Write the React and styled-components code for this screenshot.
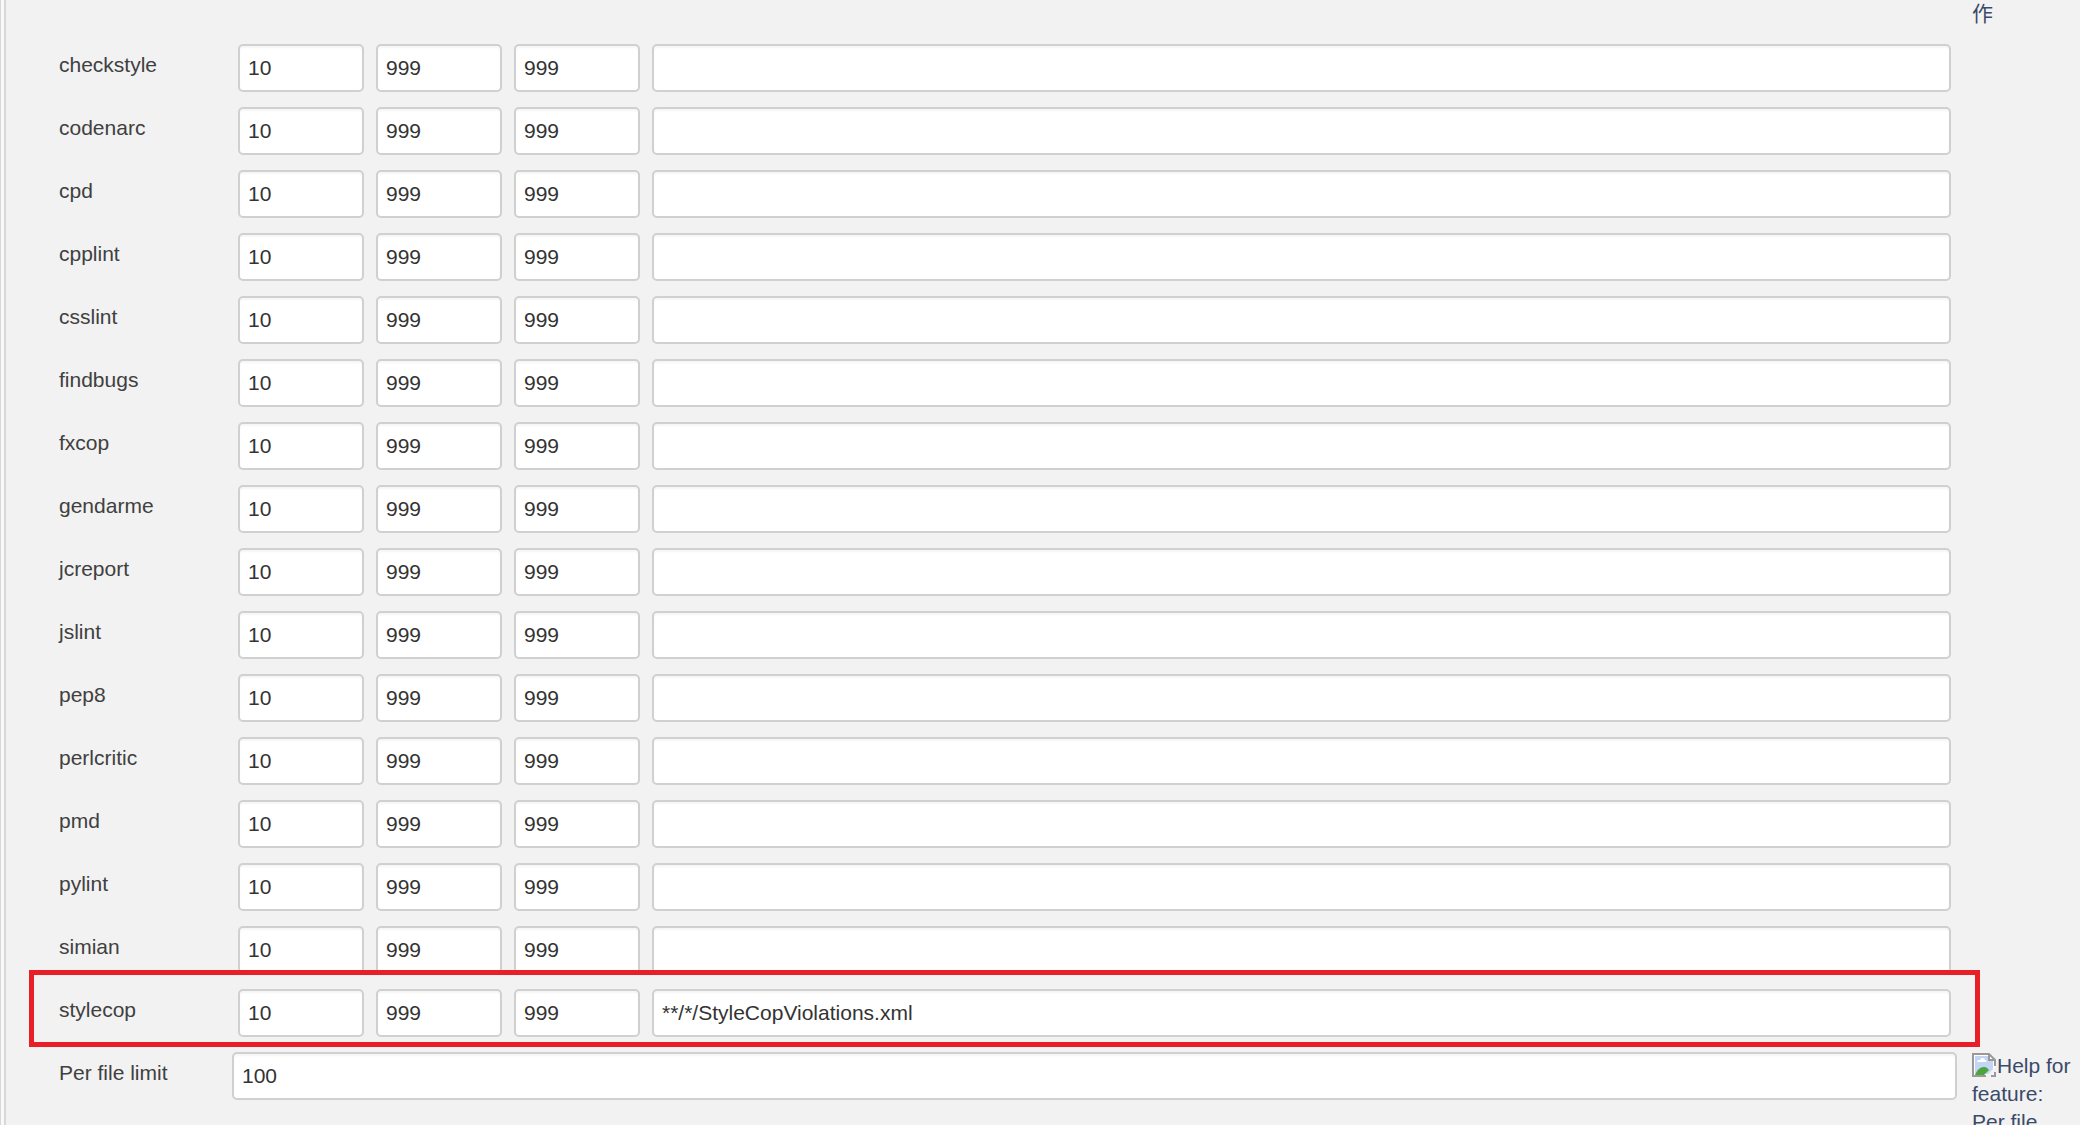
import React from 'react';
import styled, { createGlobalStyle } from 'styled-components';

const GlobalStyle = createGlobalStyle`
  * { box-sizing: border-box; }
  body {
    margin: 0;
    background: #f2f2f2;
    color: #404040;
    font: 21px/28px "Liberation Sans", Arial, "Noto Sans CJK SC", sans-serif;
  }
`;

const Page = styled.div`
  display: flex;
  height: 100vh;
  overflow: hidden;
`;

const Rail = styled.div`
  flex: none;
  width: 6px;
  background: #f9f9f9;
  border-left: 1px solid #d8d8d8;
  border-right: 2px solid #d8d8d8;
`;

const Form = styled.form`
  flex: 1;
  min-width: 0;
  padding-left: 53px;
`;

const Row = styled.div`
  position: relative;
  display: grid;
  grid-template-columns: 173px minmax(0, 1fr) 123px;
  height: 63px;
`;

const HeaderRow = styled(Row)`
  height: 44px;
`;

const Label = styled.label`
  padding-top: 7px;
`;

const Fields = styled.div`
  display: grid;
  grid-template-columns: 126px 126px 126px minmax(0, 1fr);
  gap: 12px;
  padding: 0 6px;
`;

const TextInput = styled.input`
  width: 100%;
  height: 48px;
  padding: 0 8px;
  border: 2px solid #d0d0d0;
  border-radius: 5px;
  background: #fff;
  box-shadow: inset 0 2px 2px rgba(0, 0, 0, 0.04);
  color: #333;
  font: inherit;
  outline: none;
`;

const HelpLink = styled.a`
  grid-column: 3;
  padding-left: 15px;
  color: #3b4a69;
  text-decoration: none;
`;

const BrokenImage = styled.svg`
  width: 24px;
  height: 24px;
  margin-right: 1px;
  vertical-align: -4px;
`;

const Highlight = styled.div`
  position: absolute;
  inset: -19px 100px 5px -30px;
  border: 5px solid #e81f27;
  pointer-events: none;
`;

const reports = [
  'checkstyle', 'codenarc', 'cpd', 'cpplint', 'csslint', 'findbugs', 'fxcop', 'gendarme',
  'jcreport', 'jslint', 'pep8', 'perlcritic', 'pmd', 'pylint', 'simian', 'stylecop',
];

const patterns = { stylecop: '**/*/StyleCopViolations.xml' };

function ReportRow({ name }) {
  return (
    <Row>
      <Label htmlFor={name}>{name}</Label>
      <Fields>
        <TextInput id={name} defaultValue="10" />
        <TextInput aria-label={`${name} maximum`} defaultValue="999" />
        <TextInput aria-label={`${name} unstable`} defaultValue="999" />
        <TextInput aria-label={`${name} pattern`} defaultValue={patterns[name] || ''} />
      </Fields>
      {name === 'stylecop' && <Highlight />}
    </Row>
  );
}

function BrokenImageIcon() {
  return (
    <BrokenImage viewBox="0 0 24 24" aria-hidden="true">
      <path d="M1 1h16l6 6v16H1z" fill="#fff" />
      <path d="M3 3h13v5h5v13H3z" fill="#c3d5f4" />
      <path d="M5 9c0-2 2-2 3-2 1-3 5-2 5 0 2 0 2 2 1 2z" fill="#fff" />
      <path d="M3 22c2-5 5-8 9-8 3 0 4 2 5 3l-5 5z" fill="#4aa53a" />
      <path d="M13 24 24 13v5l-6 6z" fill="#f2f2f2" />
      <path d="M14 23H1V1h16l6 6v6M23 19v4h-4M17 1v6h6" fill="none" stroke="#999" strokeWidth="2" />
    </BrokenImage>
  );
}

export default function App() {
  return (
    <Page>
      <GlobalStyle />
      <Rail />
      <Form>
        <HeaderRow>
          <HelpLink href="#action">作</HelpLink>
        </HeaderRow>
        {reports.map((name) => <ReportRow key={name} name={name} />)}
        <Row>
          <Label htmlFor="limit">Per file limit</Label>
          <TextInput id="limit" defaultValue="100" />
          <HelpLink href="#limit">
            <BrokenImageIcon />Help for feature: Per file
          </HelpLink>
        </Row>
      </Form>
    </Page>
  );
}
